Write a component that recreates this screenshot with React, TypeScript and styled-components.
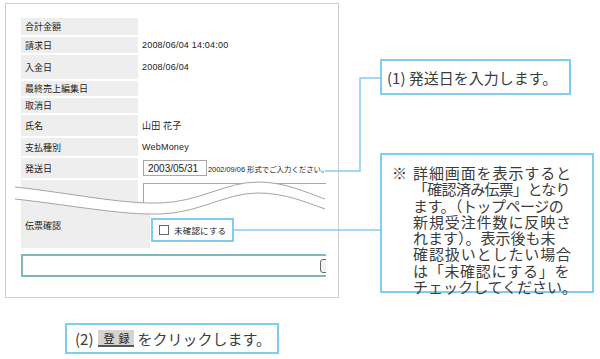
import React from 'react';
import styled, { createGlobalStyle } from 'styled-components';

const GlobalStyle = createGlobalStyle`
  html, body { margin: 0; padding: 0; background: #fff; }
  body { font-family: "Noto Sans CJK JP", "Liberation Sans", sans-serif; color: #333; }
`;

const BLUE = '#80cdf0';

const Page = styled.div`
  position: relative;
  width: 600px;
  height: 359px;
  overflow: hidden;
`;

const Top = styled.div`
  display: flex;
  align-items: flex-start;
`;

// 左の画面キャプチャ
const Panel = styled.div`
  box-sizing: border-box;
  width: 334px;
  height: 295px;
  margin: 3px 0 0 5px;
  padding: 14px 12px 0 15px;
  border: 1px solid #cfcfcf;
`;

const Rows = styled.div`
  display: flex;
  flex-direction: column;
  gap: 2px;
`;

const Row = styled.div<{ $h: number; $label?: number }>`
  display: grid;
  grid-template-columns: ${p => p.$label ?? 117}px 1fr;
  column-gap: ${p => (p.$label ? 0 : 3)}px;
  height: ${p => p.$h}px;
`;

const Label = styled.div`
  display: flex;
  align-items: center;
  padding-left: 4px;
  background: #eeeeee;
  font-family: "Noto Sans CJK JP", sans-serif;
  font-size: 9px;
  color: #222;
`;

const Value = styled.div<{ $clip?: boolean }>`
  display: flex;
  align-items: center;
  padding-left: 1px;
  font-family: "Liberation Sans", "Noto Sans CJK JP", sans-serif;
  font-size: 9px;
  letter-spacing: 0.2px;
  color: #222;
  overflow: ${p => (p.$clip ? 'hidden' : 'visible')};
`;

const DateInput = styled.div`
  box-sizing: border-box;
  width: 64px;
  height: 16px;
  margin-left: 1px;
  padding-left: 4px;
  display: flex;
  align-items: center;
  border: 1px solid #a8a8a8;
  font-size: 10px;
  letter-spacing: 0;
  color: #222;
`;

const Hint = styled.span`
  margin-left: 1px;
  font-size: 7.4px;
  letter-spacing: 0;
  white-space: nowrap;
`;

const Cut = styled.div`
  position: relative;
  display: flex;
  flex-direction: column;
`;

const EmptyInput = styled.div`
  align-self: flex-start;
  flex: none;
  box-sizing: border-box;
  width: 260px;
  height: 40px;
  margin: 3px 0 0 1px;
  border: 1px solid #a8a8a8;
`;

const CheckFrame = styled.div`
  align-self: flex-start;
  box-sizing: border-box;
  width: 83px;
  height: 24px;
  margin-top: 15px;
  padding-left: 6px;
  display: flex;
  align-items: center;
  gap: 5px;
  border: 2px solid ${BLUE};
  font-family: "Noto Sans CJK JP", sans-serif;
  font-size: 8.5px;
  color: #222;
`;

const Box = styled.span`
  width: 8px;
  height: 8px;
  border: 1px solid #666;
  background: #fff;
`;

const Wave = styled.svg`
  position: absolute;
  left: -6px;
  top: 0;
  overflow: visible;
  pointer-events: none;
`;

const ButtonBar = styled.div`
  box-sizing: border-box;
  height: 23px;
  margin-top: 4px;
  display: flex;
  justify-content: flex-end;
  align-items: center;
  border: 2px solid #7fb6c0;
  border-right: none;
  overflow: hidden;
`;

const CutButton = styled.span`
  flex: none;
  box-sizing: border-box;
  width: 30px;
  height: 14px;
  margin-right: -24px;
  border: 1.5px solid #666;
  border-radius: 3px;
  background: #f3f3f3;
`;

// 右の吹き出し
const Notes = styled.div`
  display: flex;
  flex-direction: column;
  margin-left: 41px;
`;

const Callout = styled.div<{ $w: number; $h: number; $top: number }>`
  box-sizing: border-box;
  width: ${p => p.$w}px;
  height: ${p => p.$h}px;
  margin-top: ${p => p.$top}px;
  border: 2px solid ${BLUE};
  background: #fff;
  font-size: 15px;
  color: #3c3c3c;
`;

const OneLine = styled.div`
  height: 100%;
  display: flex;
  align-items: center;
  padding-left: 5px;
  white-space: nowrap;
`;

const NoteBody = styled.div`
  display: flex;
  padding: 10px 0 0 10px;
`;

const Mark = styled.span`
  width: 21px;
  line-height: 16.3px;
`;

const Line = styled.div<{ $ls: number }>`
  line-height: 16.3px;
  white-space: nowrap;
  letter-spacing: ${p => p.$ls}px;
`;

const Caption = styled.div`
  box-sizing: border-box;
  width: 214px;
  height: 31px;
  margin: 25px 0 0 65px;
  padding-left: 8px;
  display: flex;
  align-items: center;
  border: 2px solid ${BLUE};
  font-size: 15px;
  color: #3c3c3c;
  white-space: nowrap;
`;

const RegButton = styled.span`
  box-sizing: border-box;
  width: 36px;
  height: 17px;
  margin: 0 3px 0 5px;
  display: flex;
  align-items: center;
  justify-content: center;
  background: #d6d3cc;
  border-bottom: 2px solid #555;
  font-size: 11px;
  letter-spacing: 4px;
  padding-left: 4px;
  color: #222;
`;

const Lines = styled.svg`
  position: absolute;
  left: 0;
  top: 0;
  pointer-events: none;
`;

const rows: [string, string, number][] = [
  ['合計金額', '', 17],
  ['請求日', '2008/06/04 14:04:00', 16],
  ['入金日', '2008/06/04', 24],
  ['最終売上編集日', '', 15],
  ['取消日', '', 15],
  ['氏名', '山田 花子', 21],
  ['支払種別', 'WebMoney', 18],
];

const noteLines: [string, number][] = [
  ['詳細画面を表示すると', 0.9],
  ['「確認済み伝票」となり', -0.7],
  ['ます。（トップページの', -0.5],
  ['新規受注件数に反映さ', 0.9],
  ['れます）。表示後も未', 0],
  ['確認扱いとしたい場合', 0.9],
  ['は「未確認にする」を', 0.7],
  ['チェックしてください。', 0],
];

const upper = 'M0,7 C55,13 105,24 145,23 C185,22 210,2 243,2 C270,2 290,12 310,19';
const lower = 'M0,19 C55,25 105,35 145,34 C185,33 210,13 243,13 C270,13 290,22 310,29';
const band =
  'M0,7 C55,13 105,24 145,23 C185,22 210,2 243,2 C270,2 290,12 310,19 L310,29 C290,22 270,13 243,13 C210,13 185,33 145,34 C105,35 55,25 0,19 Z';

const App = () => {
  return (
    <>
      <GlobalStyle />
      <Page>
        <Top>
          <Panel>
            <Rows>
              {rows.map(([label, value, h]) => (
                <Row key={label} $h={h}>
                  <Label>{label}</Label>
                  <Value>{value}</Value>
                </Row>
              ))}
              <Row $h={20}>
                <Label>発送日</Label>
                <Value>
                  <DateInput>2003/05/31</DateInput>
                  <Hint>2002/09/06 形式でご入力ください。</Hint>
                </Value>
              </Row>
              <Cut>
                <Row $h={23}>
                  <Label />
                  <Value $clip>
                    <EmptyInput />
                  </Value>
                </Row>
                <Row $h={45} $label={129}>
                  <Label>伝票確認</Label>
                  <Value>
                    <CheckFrame>
                      <Box />
                      未確認にする
                    </CheckFrame>
                  </Value>
                </Row>
                <Wave width="310" height="40" viewBox="0 0 310 40">
                  <path d={band} fill="#fff" />
                  <path d={upper} fill="none" stroke="#a4a4a4" strokeWidth="1" />
                  <path d={lower} fill="none" stroke="#a4a4a4" strokeWidth="1" />
                </Wave>
              </Cut>
              <ButtonBar>
                <CutButton />
              </ButtonBar>
            </Rows>
          </Panel>
          <Notes>
            <Callout $w={191} $h={36} $top={59}>
              <OneLine>(1) 発送日を入力します。</OneLine>
            </Callout>
            <Callout $w={214} $h={140} $top={58}>
              <NoteBody>
                <Mark>※</Mark>
                <div>
                  {noteLines.map(([text, ls]) => (
                    <Line key={text} $ls={ls}>
                      {text}
                    </Line>
                  ))}
                </div>
              </NoteBody>
            </Callout>
          </Notes>
        </Top>
        <Caption>
          (2)
          <RegButton>登録</RegButton>
          をクリックします。
        </Caption>
        <Lines width="600" height="359" viewBox="0 0 600 359">
          <path d="M325,171 H360 V78 H380" fill="none" stroke={BLUE} strokeWidth="1.5" />
          <path d="M232,230 H380" fill="none" stroke={BLUE} strokeWidth="1.5" />
        </Lines>
      </Page>
    </>
  );
};

export default App;
